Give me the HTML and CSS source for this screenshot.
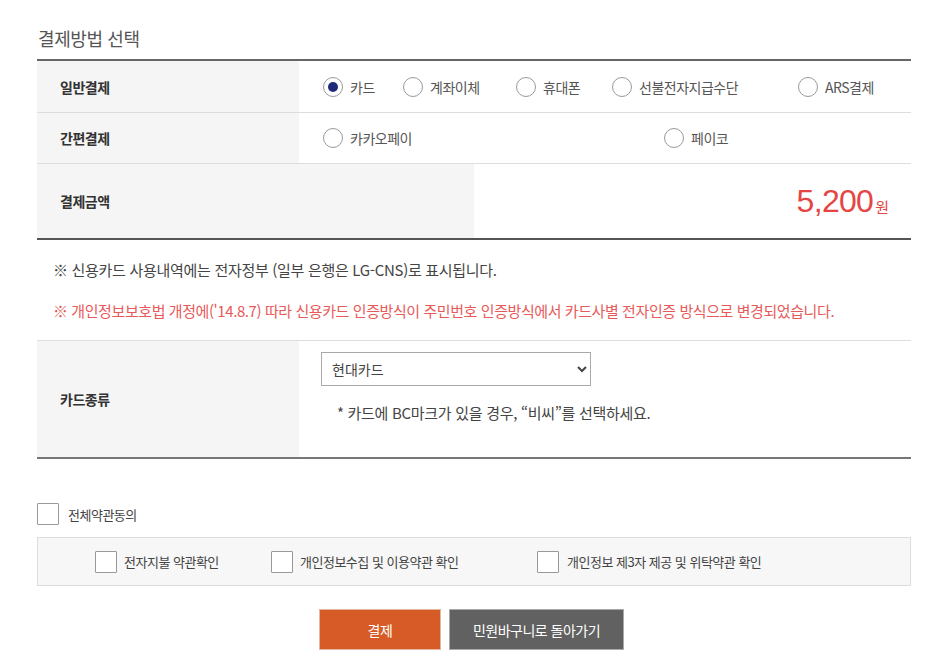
FILE: index.html
```html
<!DOCTYPE html>
<html lang="ko">
<head>
<meta charset="utf-8">
<link rel="stylesheet" href="styles.css">
</head>
<body>
<div class="page">
  <h2 class="title">결제방법 선택</h2>
  <div class="paytable">
    <div class="row r1">
      <div class="label">일반결제</div>
      <div class="cell opts opts5">
        <label class="opt"><input type="radio" name="pay" checked><span>카드</span></label>
        <label class="opt"><input type="radio" name="pay"><span>계좌이체</span></label>
        <label class="opt"><input type="radio" name="pay"><span>휴대폰</span></label>
        <label class="opt"><input type="radio" name="pay"><span>선불전자지급수단</span></label>
        <label class="opt"><input type="radio" name="pay"><span>ARS결제</span></label>
      </div>
    </div>
    <div class="row r2">
      <div class="label">간편결제</div>
      <div class="cell opts opts2">
        <label class="opt"><input type="radio" name="pay"><span>카카오페이</span></label>
        <label class="opt"><input type="radio" name="pay"><span>페이코</span></label>
      </div>
    </div>
    <div class="row r3">
      <div class="label wide">결제금액</div>
      <div class="cell amount"><span class="num">5,200</span><span class="won">원</span></div>
    </div>
  </div>
  <div class="notes">
    <p class="note">※ 신용카드 사용내역에는 전자정부 (일부 은행은 LG-CNS)로 표시됩니다.</p>
    <p class="note red">※ 개인정보보호법 개정에('14.8.7) 따라 신용카드 인증방식이 주민번호 인증방식에서 카드사별 전자인증 방식으로 변경되었습니다.</p>
  </div>
  <div class="cardtable">
    <div class="row r4">
      <div class="label">카드종류</div>
      <div class="cell cardcell">
        <select class="cardsel">
          <option>현대카드</option>
          <option>비씨</option>
          <option>국민카드</option>
          <option>신한카드</option>
          <option>삼성카드</option>
        </select>
        <p class="hint">* 카드에 BC마크가 있을 경우, “비씨”를 선택하세요.</p>
      </div>
    </div>
  </div>
  <label class="agreeall"><input type="checkbox" class="cb"><span>전체약관동의</span></label>
  <div class="agreebox">
    <label class="agree a1"><input type="checkbox" class="cb"><span>전자지불 약관확인</span></label>
    <label class="agree a2"><input type="checkbox" class="cb"><span>개인정보수집 및 이용약관 확인</span></label>
    <label class="agree a3"><input type="checkbox" class="cb"><span>개인정보 제3자 제공 및 위탁약관 확인</span></label>
  </div>
  <div class="buttons">
    <button class="btn pay">결제</button>
    <button class="btn back">민원바구니로 돌아가기</button>
  </div>
</div>
</body>
</html>
```

FILE: styles.css
```css
* { box-sizing: border-box; }
html, body { margin: 0; padding: 0; background: #fff; }
body {
  font-family: "Noto Sans CJK KR", "Noto Sans", sans-serif;
  color: #444;
  font-size: 14px;
}
.page {
  width: 874px;
  margin-left: 37px;
  padding-top: 24px;
}
.title {
  margin: 0 0 0 1px;
  font-size: 18px;
  font-weight: 400;
  color: #555;
  line-height: 28px;
  height: 35px;
  letter-spacing: -0.4px;
}
.paytable {
  border-top: 2px solid #666;
  border-bottom: 2px solid #555;
}
.row {
  display: flex;
  border-bottom: 1px solid #ddd;
}
.row:last-child { border-bottom: none; }
.label {
  width: 262px;
  background: #f5f5f5;
  font-weight: 700;
  color: #333;
  font-size: 14px;
  display: flex;
  align-items: center;
  padding-left: 23px;
  letter-spacing: -0.5px;
}
.label.wide { width: 437px; }
.cell {
  flex: 1;
  display: flex;
  align-items: center;
}
.r1 { height: 52px; }
.r2 { height: 51px; }
.r3 { height: 74px; }
.opts { padding-left: 24px; }
.opts5 { display: grid; grid-template-columns: 80px 113px 96px 186px auto; align-items: center; }
.opts2 { display: grid; grid-template-columns: 341px auto; align-items: center; }
.opt {
  display: flex;
  align-items: center;
  color: #555;
  font-size: 14px;
  letter-spacing: -0.5px;
}
.opt input {
  appearance: none;
  -webkit-appearance: none;
  width: 20px;
  height: 20px;
  margin: 0 7px 0 0;
  border: 1px solid #999;
  border-radius: 50%;
  background: #fff;
  display: grid;
  place-content: center;
}
.opt input:checked::before {
  content: "";
  width: 10px;
  height: 10px;
  border-radius: 50%;
  background: #1f2a7a;
}
.amount {
  justify-content: flex-end;
  padding-right: 22px;
  color: #e54545;
  align-items: center;
}
.num {
  font-family: "Liberation Sans", "Noto Sans", sans-serif;
  font-size: 32px;
  letter-spacing: -0.7px;
  line-height: 1;
}
.won {
  font-size: 15px;
  margin-left: 2px;
  margin-top: 11px;
}
.notes {
  padding: 18px 0 18px 16px;
}
.note {
  margin: 0;
  font-size: 15px;
  line-height: 23px;
  color: #444;
  letter-spacing: -0.3px;
}
.note + .note { margin-top: 18px; }
.note.red { color: #e85a5a; letter-spacing: -0.42px; }
.cardtable {
  border-top: 1px solid #ddd;
  border-bottom: 2px solid #777;
}
.r4 { height: 116px; }
.cardcell {
  flex-direction: column;
  align-items: flex-start;
  justify-content: flex-start;
  padding: 11px 0 0 22px;
}
.cardsel {
  width: 270px;
  height: 34px;
  border: 1px solid #aaa;
  border-radius: 0;
  background: #fff;
  font-family: "Noto Sans CJK KR", sans-serif;
  font-size: 14px;
  color: #444;
  padding: 0 6px;
  margin: 0;
}
.hint {
  margin: 16px 0 0 16px;
  font-size: 15px;
  color: #444;
  letter-spacing: -0.3px;
}
.cb {
  appearance: none;
  -webkit-appearance: none;
  width: 22px;
  height: 22px;
  border: 1px solid #999;
  background: #fff;
  margin: 0 9px 0 0;
  border-radius: 1px;
}
.agreeall {
  display: flex;
  align-items: center;
  margin-top: 44px;
  width: max-content;
  font-size: 13px;
  color: #444;
  letter-spacing: -0.5px;
}
.agreebox {
  margin-top: 12px;
  height: 49px;
  border: 1px solid #ddd;
  background: #f7f7f7;
  display: grid;
  grid-template-columns: 176px 266px auto;
  align-items: center;
  padding-left: 57px;
}
.agree {
  display: flex;
  align-items: center;
  font-size: 13px;
  color: #444;
  letter-spacing: -0.5px;
  width: max-content;
}
.agree .cb { margin-right: 7px; }
.a3 .cb { margin-right: 8px; }
.buttons {
  display: flex;
  justify-content: center;
  gap: 8px;
  margin-top: 23px;
  padding-right: 5px;
}
.btn {
  height: 41px;
  border: 1px solid transparent;
  color: #fff;
  font-family: "Noto Sans CJK KR", sans-serif;
  font-size: 14px;
  letter-spacing: -0.5px;
  cursor: pointer;
}
.btn.pay { width: 122px; background: #d65b26; border-color: #e2b8a0; }
.btn.back { width: 175px; background: #616161; border-color: #aaa; }
```
